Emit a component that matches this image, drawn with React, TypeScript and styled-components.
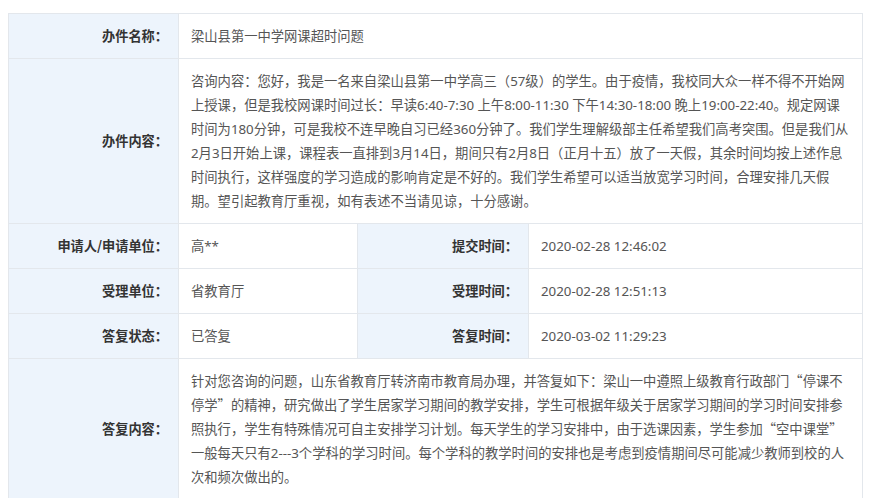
import React from "react";
import styled, { createGlobalStyle } from "styled-components";

const GlobalStyle = createGlobalStyle`
  html, body {
    margin: 0;
    padding: 0;
    background: #ffffff;
  }
  body {
    font-family: "Noto Sans CJK SC", "Noto Sans", sans-serif;
  }
`;

const Page = styled.div`
  padding: 13px 8px 0 8px;
`;

const Table = styled.div`
  display: grid;
  grid-template-columns: 170px 179px 171px 1fr;
  border-top: 1px solid #e3e7ec;
  border-left: 1px solid #e3e7ec;
`;

const Label = styled.div`
  background: #edf4fc;
  color: #333333;
  font-weight: 700;
  font-size: 13.2px;
  line-height: 24px;
  padding: 10px 10px 10px 8px;
  text-align: right;
  border-right: 1px solid #e3e7ec;
  border-bottom: 1px solid #e3e7ec;
  display: flex;
  align-items: center;
  justify-content: flex-end;
`;

const Value = styled.div<{ $span?: number }>`
  grid-column: span ${(p) => p.$span ?? 1};
  background: #ffffff;
  color: #555555;
  font-size: 13.3px;
  line-height: 24px;
  padding: 10px 12px 10px 12px;
  border-right: 1px solid #e3e7ec;
  border-bottom: 1px solid #e3e7ec;
  white-space: nowrap;
  overflow: hidden;
`;

const Latin = styled.span`
  font-family: "Noto Sans", "Noto Sans CJK SC", sans-serif;
`;

const Line = styled.div``;

const withLatin = (text: string) =>
  text.split(/([0-9A-Za-z:\-*. ]+)/).map((part, i) =>
    /^[0-9A-Za-z:\-*. ]+$/.test(part) ? <Latin key={i}>{part}</Latin> : part
  );

type RowProps = { label: string; lines: string[] };

const consult = [
  "咨询内容：您好，我是一名来自梁山县第一中学高三（57级）的学生。由于疫情，我校同大众一样不得不开始网",
  "上授课，但是我校网课时间过长：早读6:40-7:30 上午8:00-11:30 下午14:30-18:00 晚上19:00-22:40。规定网课",
  "时间为180分钟，可是我校不连早晚自习已经360分钟了。我们学生理解级部主任希望我们高考突围。但是我们从",
  "2月3日开始上课，课程表一直排到3月14日，期间只有2月8日（正月十五）放了一天假，其余时间均按上述作息",
  "时间执行，这样强度的学习造成的影响肯定是不好的。我们学生希望可以适当放宽学习时间，合理安排几天假",
  "期。望引起教育厅重视，如有表述不当请见谅，十分感谢。",
];

const reply = [
  "针对您咨询的问题，山东省教育厅转济南市教育局办理，并答复如下：梁山一中遵照上级教育行政部门“停课不",
  "停学”的精神，研究做出了学生居家学习期间的教学安排，学生可根据年级关于居家学习期间的学习时间安排参",
  "照执行，学生有特殊情况可自主安排学习计划。每天学生的学习安排中，由于选课因素，学生参加“空中课堂”",
  "一般每天只有2---3个学科的学习时间。每个学科的教学时间的安排也是考虑到疫情期间尽可能减少教师到校的人",
  "次和频次做出的。",
];

const WideRow = ({ label, lines }: RowProps) => (
  <>
    <Label>{label}</Label>
    <Value $span={3}>
      {lines.map((l, i) => (
        <Line key={i}>{withLatin(l)}</Line>
      ))}
    </Value>
  </>
);

const pairs = [
  ["申请人/申请单位：", "高**", "提交时间：", "2020-02-28 12:46:02"],
  ["受理单位：", "省教育厅", "受理时间：", "2020-02-28 12:51:13"],
  ["答复状态：", "已答复", "答复时间：", "2020-03-02 11:29:23"],
];

export default function App() {
  return (
    <>
      <GlobalStyle />
      <Page>
        <Table>
          <WideRow label="办件名称：" lines={["梁山县第一中学网课超时问题"]} />
          <WideRow label="办件内容：" lines={consult} />
          {pairs.map(([l1, v1, l2, v2]) => (
            <React.Fragment key={l1}>
              <Label>{l1}</Label>
              <Value>{withLatin(v1)}</Value>
              <Label>{l2}</Label>
              <Value>{withLatin(v2)}</Value>
            </React.Fragment>
          ))}
          <WideRow label="答复内容：" lines={reply} />
        </Table>
      </Page>
    </>
  );
}
